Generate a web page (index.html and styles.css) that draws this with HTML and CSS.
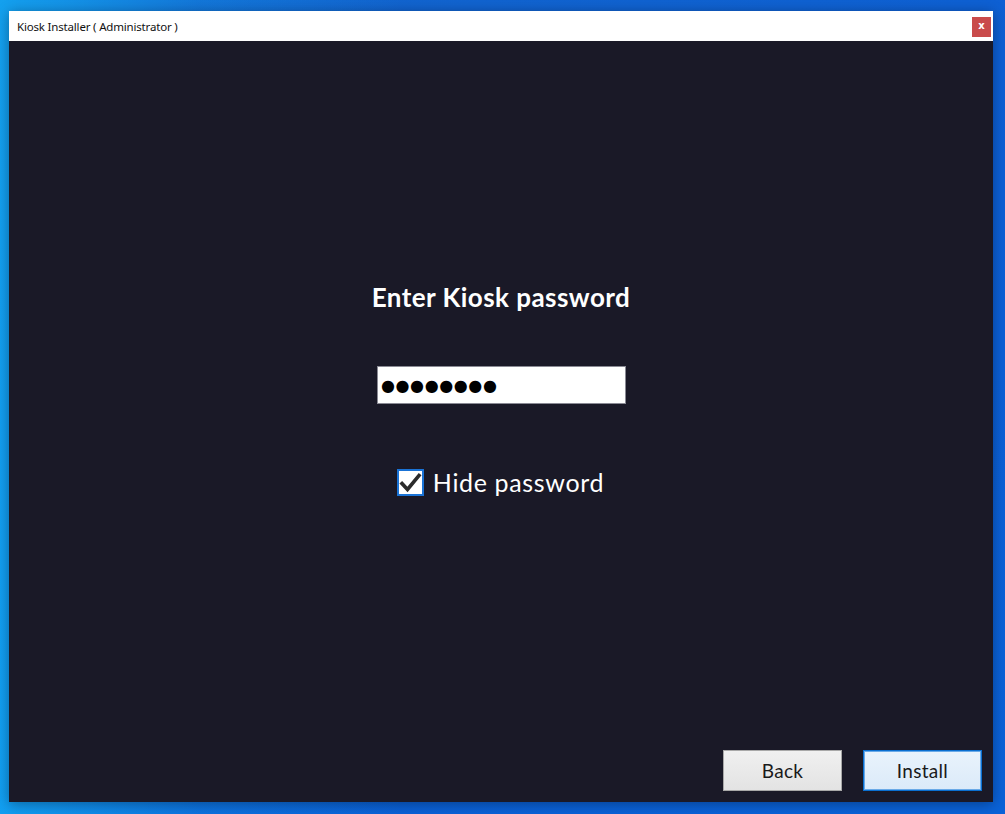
FILE: index.html
```html
<!DOCTYPE html>
<html lang="en">
<head>
<meta charset="utf-8">
<title>Kiosk Installer</title>
<link rel="stylesheet" href="styles.css">
</head>
<body>
<div class="window">
  <div class="titlebar">
    <span class="title">Kiosk Installer ( Administrator )</span>
    <button class="close" type="button">x</button>
  </div>
  <div class="content">
    <div class="center">
      <h1 class="heading">Enter Kiosk password</h1>
      <div class="pwbox">●●●●●●●●</div>
      <label class="check">
        <span class="box">
          <svg width="23" height="23" viewBox="0 0 23 23"><path d="M3 12.5 L8.5 18.5 L20 4.5" fill="none" stroke="#2b2b2b" stroke-width="3.6" stroke-linecap="square"/></svg>
        </span>
        <span class="check-label">Hide password</span>
      </label>
    </div>
    <div class="actions">
      <button class="btn back" type="button">Back</button>
      <button class="btn install" type="button">Install</button>
    </div>
  </div>
</div>
</body>
</html>
```

FILE: styles.css
```css
html, body {
  margin: 0;
  padding: 0;
  height: 100%;
}
body {
  width: 1005px;
  height: 814px;
  overflow: hidden;
  background: linear-gradient(160deg, #1466cc 0%, #0d5fd4 35%, #0b5fd6 60%, #0a62d8 100%);
  position: relative;
}
body::before {
  content: "";
  position: absolute;
  inset: 0;
  background: linear-gradient(90deg, rgba(20,180,250,0.75) 0%, rgba(20,170,250,0.25) 20%, rgba(0,0,0,0) 40%);
}
.window {
  position: relative;
  z-index: 1;
  margin: 11px 0 0 9px;
  width: 984px;
  height: 791px;
  display: flex;
  flex-direction: column;
  box-shadow: 0 2px 12px rgba(0,0,0,0.35);
}
.titlebar {
  height: 30px;
  background: #ffffff;
  display: flex;
  align-items: center;
  justify-content: space-between;
  padding: 0 2px 0 8px;
}
.title {
  font-family: "Noto Sans", "Liberation Sans", sans-serif;
  font-size: 11.5px;
  color: #111;
  letter-spacing: -0.18px;
}
.close {
  width: 19px;
  height: 20px;
  margin-top: 2px;
  border: none;
  padding: 0 0 3px 0;
  background: #c94b4b;
  color: #fff;
  font-family: "DejaVu Sans", sans-serif;
  font-weight: bold;
  font-size: 10px;
  line-height: 17px;
}
.content {
  flex: 1;
  background: #1a1927;
  display: flex;
  flex-direction: column;
  justify-content: space-between;
}
.center {
  display: flex;
  flex-direction: column;
  align-items: center;
  padding-top: 241px;
}
.heading {
  margin: 0;
  font-family: "Lato", "Open Sans", sans-serif;
  font-weight: bold;
  font-size: 26px;
  line-height: 30px;
  color: #ffffff;
  letter-spacing: 0.45px;
}
.pwbox {
  margin-top: 54px;
  margin-left: 1px;
  width: 244px;
  height: 36px;
  background: #fff;
  border: 1px solid #8a8a94;
  font-family: "DejaVu Sans", sans-serif;
  font-size: 16px;
  line-height: 38px;
  padding-left: 3px;
  color: #000;
  letter-spacing: 0.6px;
}
.check {
  margin-top: 63px;
  margin-left: -1px;
  display: flex;
  align-items: center;
  gap: 9px;
}
.box {
  width: 23px;
  height: 23px;
  border: 2px solid #1a73d6;
  background: #fff;
  display: block;
}
.box svg {
  display: block;
}
.check-label {
  font-family: "Lato", "Open Sans", sans-serif;
  font-size: 25px;
  color: #fff;
  letter-spacing: 0.65px;
}
.actions {
  display: flex;
  justify-content: flex-end;
  gap: 21px;
  padding: 0 11px 11px 0;
}
.btn {
  width: 119px;
  height: 41px;
  font-family: "Lato", "Open Sans", sans-serif;
  font-size: 19px;
  color: #1a1a1a;
  padding: 0;
  letter-spacing: 0.3px;
}
.back {
  background: linear-gradient(#f0f0f0, #e3e3e3);
  border: 1px solid #a8a8a8;
}
.install {
  background: linear-gradient(#e9f3fc, #dbeaf9);
  border: 1px solid #0a6fd0;
  box-shadow: inset 0 0 0 1px #6aaae8;
}
```
